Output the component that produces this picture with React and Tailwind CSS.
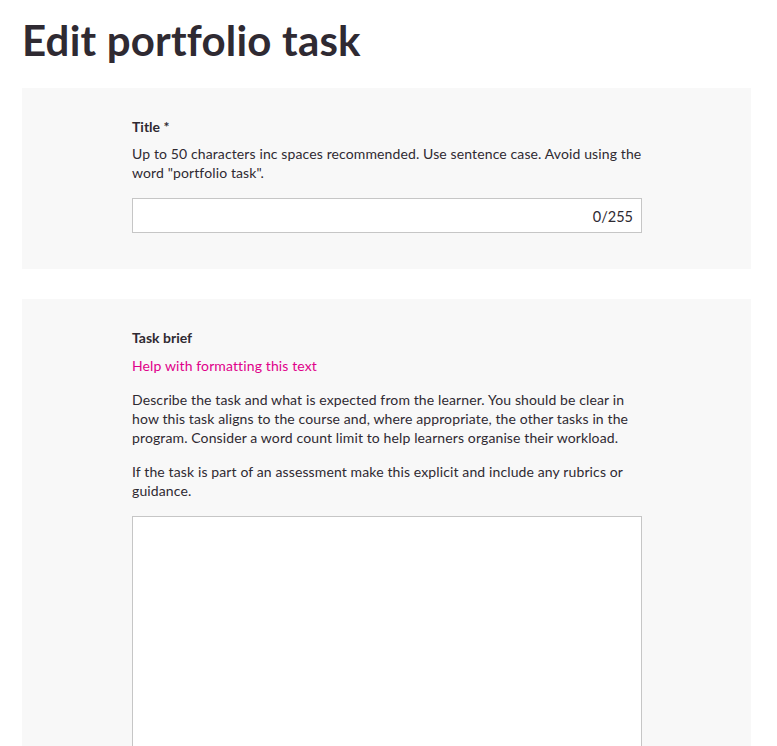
export default function App() {
  return (
    <div className="min-h-screen bg-white text-[#2f2a32]" style={{ fontFamily: "Lato, 'Noto Sans', sans-serif" }}>
      <div className="pl-[22px] pr-[26px] pt-[15px]">
        <h1 className="text-[42px] font-bold leading-[50px] tracking-[0.2px]">Edit portfolio task</h1>

        <section className="mt-[23px] bg-[#f8f8f8] pl-[110px] pr-[110px] pt-[29px] pb-[36px]">
          <div className="w-[510px]">
            <label className="block text-[14px] font-bold leading-[20px]">Title *</label>
            <p className="mt-[7px] text-[14px] leading-[19px] tracking-[0.12px]">
              Up to 50 characters inc spaces recommended. Use sentence case. Avoid using the word "portfolio task".
            </p>
            <div className="mt-[16px] flex h-[35px] items-center justify-end border border-[#c6c6c6] bg-white px-[8px] pt-[2px] text-[14.5px]">
              0/255
            </div>
          </div>
        </section>

        <section className="mt-[30px] bg-[#f8f8f8] pl-[110px] pr-[110px] pt-[29px] pb-[40px]">
          <div className="w-[510px]">
            <label className="block text-[14px] font-bold leading-[20px]">Task brief</label>
            <a className="mt-[8px] block text-[14px] leading-[19px] tracking-[0.12px] text-[#e0008a]">Help with formatting this text</a>
            <p className="mt-[15px] text-[14px] leading-[19px] tracking-[0.12px]">
              Describe the task and what is expected from the learner. You should be clear in how this task aligns to the course and, where appropriate, the other tasks in the program. Consider a word count limit to help learners organise their workload.
            </p>
            <p className="mt-[15px] text-[14px] leading-[19px] tracking-[0.12px]">
              If the task is part of an assessment make this explicit and include any rubrics or guidance.
            </p>
            <div className="mt-[16px] h-[300px] border border-[#c6c6c6] bg-white"></div>
          </div>
        </section>
      </div>
    </div>
  );
}
